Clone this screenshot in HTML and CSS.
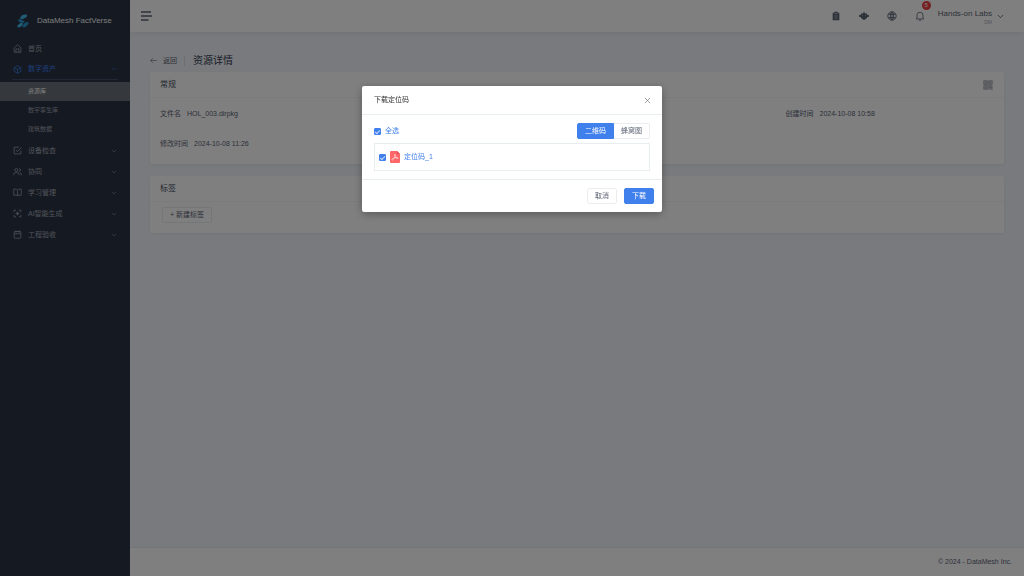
FILE: index.html
```
<!DOCTYPE html>
<html lang="zh-CN">
<head>
    <meta charset="UTF-8">
    <title>资源详情 - DataMesh FactVerse</title>
    <link rel="stylesheet" href="styles.css">
</head>
<body>
    <svg class="symbols" aria-hidden="true">
        <symbol id="chevron" viewBox="0 0 24 24"><path d="M3 7l9 9 9-9"/></symbol>
    </svg>

    <div class="app">
        <aside class="sidebar">
            <a class="brand" href="#">
                <svg class="logo" viewBox="0 0 24 30">
                    <path class="logo-light" d="M6 8Q9 1 17 1H20Q22 6 17 8L11 11Q5 12 6 8Z"/>
                    <path class="logo-mid" d="M2 11Q5 10 9 13L15 15Q16 19 10 19Q1 18 2 11Z"/>
                    <path class="logo-light" d="M0 25Q4 19 10 19Q13 20 11 24Q7 29 2 29Q-1 28 0 25Z"/>
                    <path class="logo-mid" d="M12 24Q16 17 21 17Q25 18 23 22Q18 29 13 29Q10 28 12 24Z"/>
                </svg>
                <span>DataMesh FactVerse</span>
            </a>
            <nav class="menu">
                <a class="menu-item" href="#">
                    <svg class="icon" viewBox="0 0 24 24"><path d="M3 10l9-8 9 8v12H3zM8 22v-9h8v9"/></svg>
                    <span>首页</span>
                </a>
                <a class="menu-item open" href="#">
                    <svg class="icon" viewBox="0 0 24 24"><path d="M12 2l9 5v10l-9 5-9-5V7zM3 7l9 5 9-5M12 12v10"/></svg>
                    <span>数字资产</span>
                    <svg class="arrow up"><use href="#chevron"/></svg>
                </a>
                <div class="submenu">
                    <a class="active" href="#">资源库</a>
                    <a href="#">数字孪生库</a>
                    <a href="#">建筑数据</a>
                </div>
                <a class="menu-item" href="#">
                    <svg class="icon" viewBox="0 0 24 24"><path d="M21 12v9H3V3h13M8 10l4 5L22 4"/></svg>
                    <span>设备检查</span>
                    <svg class="arrow"><use href="#chevron"/></svg>
                </a>
                <a class="menu-item" href="#">
                    <svg class="icon" viewBox="0 0 24 24"><circle cx="9" cy="8" r="4"/><path d="M2 22v-3q0-4 4-4h6q4 0 4 4v3M16 4q4 1 4 4t-4 4M19 15q3 1 3 4v3"/></svg>
                    <span>协同</span>
                    <svg class="arrow"><use href="#chevron"/></svg>
                </a>
                <a class="menu-item" href="#">
                    <svg class="icon" viewBox="0 0 24 24"><path d="M12 6q-2-3-5-3H2v16h6q3 0 4 2 1-2 4-2h6V3h-5q-3 0-5 3zM12 6v15"/></svg>
                    <span>学习管理</span>
                    <svg class="arrow"><use href="#chevron"/></svg>
                </a>
                <a class="menu-item" href="#">
                    <svg class="icon" viewBox="0 0 24 24"><path d="M3 8V3h5M16 3h5v5M21 16v5h-5M8 21H3v-5M12 7v10M7 12h10M8 8l1 1M16 8l-1 1M8 16l1-1M16 16l-1-1"/></svg>
                    <span>AI智能生成</span>
                    <svg class="arrow"><use href="#chevron"/></svg>
                </a>
                <a class="menu-item" href="#">
                    <svg class="icon" viewBox="0 0 24 24"><rect x="3" y="4" width="18" height="18" rx="2"/><path d="M3 10h18M8 1v6M16 1v6"/></svg>
                    <span>工程验收</span>
                    <svg class="arrow"><use href="#chevron"/></svg>
                </a>
            </nav>
        </aside>

        <div class="page">
            <header class="topbar">
                <button class="toggle" type="button" aria-label="折叠菜单">
                    <svg viewBox="0 0 24 20"><path d="M1 2h20M1 10h22M1 18h15"/></svg>
                </button>
                <div class="tools">
                    <button class="tool" type="button" aria-label="任务">
                        <svg viewBox="0 0 24 24"><path class="solid" d="M4 4h4V2h8v2h4v18H4z"/><path class="cut" d="M8 6h8M8 12h8M8 17h8"/></svg>
                    </button>
                    <button class="tool" type="button" aria-label="助手">
                        <svg viewBox="0 0 28 24"><path class="solid" d="M14 0l3 5h4q2 0 2 4h3q2 0 2 3t-2 3h-3q0 4-4 5l-5 4-5-4q-4-1-4-5H2q-2 0-2-3t2-3h3q0-4 2-4h4z"/><circle class="eye" cx="10" cy="11" r="1"/><circle class="eye" cx="18" cy="11" r="1"/></svg>
                    </button>
                    <button class="tool" type="button" aria-label="语言">
                        <svg viewBox="0 0 24 24"><circle cx="12" cy="12" r="10"/><ellipse cx="12" cy="12" rx="4" ry="10"/><path d="M3 8h18M3 16h18M12 2v20"/></svg>
                    </button>
                    <button class="tool" type="button" aria-label="通知">
                        <svg viewBox="0 0 24 24"><path d="M3 19h18l-2-4V9q0-6-7-6T5 9v6zM9 22h6"/></svg>
                        <span class="badge">5</span>
                    </button>
                    <button class="user" type="button">
                        <span class="user-text">
                            <span class="user-name">Hands-on Labs</span>
                            <span class="user-role">DM</span>
                        </span>
                        <svg><use href="#chevron"/></svg>
                    </button>
                </div>
            </header>

            <main class="content">
                <div class="page-head">
                    <a class="back" href="#">
                        <svg viewBox="0 0 24 24"><path d="M23 12H2M10 4l-8 8 8 8"/></svg>
                        返回
                    </a>
                    <h1>资源详情</h1>
                </div>

                <section class="card">
                    <div class="card-head">
                        <h2>常规</h2>
                        <button class="qr" type="button" aria-label="定位码">
                            <svg viewBox="0 0 24 24"><path class="qr-back" d="M1 1h22v22H1z"/><path d="M2 2h8v8H2zM14 2h8v8h-8zM2 14h8v8H2zM5 6h2M17 6h2M5 18h2M13 14h4v4h-3v4M19 13v5h4M18 22h5"/></svg>
                        </button>
                    </div>
                    <dl class="fields">
                        <div><dt>文件名</dt><dd>HOL_003.dirpkg</dd></div>
                        <div><dt>创建时间</dt><dd>2024-10-08 10:58</dd></div>
                        <div><dt>修改时间</dt><dd>2024-10-08 11:26</dd></div>
                    </dl>
                </section>

                <section class="card">
                    <div class="card-head">
                        <h2>标签</h2>
                    </div>
                    <div class="tags">
                        <button class="btn" type="button">+ 新建标签</button>
                    </div>
                </section>
            </main>

            <footer class="footer">© 2024 - DataMesh Inc.</footer>
        </div>
    </div>

    <div class="overlay">
        <div class="modal" role="dialog" aria-modal="true" aria-labelledby="modal-title">
            <div class="modal-head">
                <h2 id="modal-title">下载定位码</h2>
                <button class="close" type="button" aria-label="关闭">
                    <svg viewBox="0 0 24 24"><path d="M3 3l18 18M21 3L3 21"/></svg>
                </button>
            </div>
            <div class="modal-body">
                <div class="modal-bar">
                    <label class="check"><input type="checkbox" checked>全选</label>
                    <div class="segmented">
                        <button class="btn primary" type="button">二维码</button>
                        <button class="btn" type="button">蜂窝图</button>
                    </div>
                </div>
                <div class="code-list">
                    <label class="check">
                        <input type="checkbox" checked>
                        <svg class="pdf" viewBox="0 0 20 24"><path class="pdf-page" d="M2 0h12l6 6v16q0 2-2 2H2q-2 0-2-2V2q0-2 2-2z"/><path class="pdf-fold" d="M14 0l6 6h-6z"/><path class="pdf-mark" d="M9 7q2-1 2 2-1 6-6 9-2 0-1-2 4-3 10-3 3 0 2 2-3 1-6-4-1-3-1-4z"/></svg>
                        定位码_1
                    </label>
                </div>
            </div>
            <div class="modal-foot">
                <button class="btn" type="button">取消</button>
                <button class="btn primary" type="button">下载</button>
            </div>
        </div>
    </div>
</body>
</html>
```
FILE: styles.css
```
* {
    box-sizing: border-box;
}
body {
    margin: 0;
    font-family: "Liberation Sans", "Noto Sans CJK SC", sans-serif;
    font-size: 7px;
    line-height: 10px;
    color: #5a6274;
    background: #f3f5fa;
}
h1, h2, dl, dd {
    margin: 0;
    font-weight: 400;
}
a {
    color: inherit;
    text-decoration: none;
}
button {
    font: inherit;
    color: inherit;
    padding: 0;
    border: 0;
    background: none;
    cursor: pointer;
}
svg {
    display: block;
    flex: none;
    fill: none;
    stroke: currentColor;
    stroke-width: 2;
}
.symbols {
    display: none;
}
.app {
    display: flex;
    min-height: 100vh;
}

/* sidebar */
.sidebar {
    flex: none;
    width: 130px;
    background: #2b3344;
    color: #a0a5b0;
}
.brand {
    display: flex;
    align-items: center;
    gap: 8px;
    height: 38px;
    padding: 3px 0 0 17px;
    font-size: 8px;
    color: #f0f2f5;
}
.logo {
    width: 12px;
    height: 14px;
    stroke: none;
}
.logo-light {
    fill: #42b7e8;
}
.logo-mid {
    fill: #2599d2;
}
.menu-item {
    display: flex;
    align-items: center;
    gap: 6px;
    height: 21px;
    padding: 0 13px;
}
.menu-item.open {
    margin: 0 12px;
    padding: 0 1px;
    color: #3a7ff0;
    border-bottom: 1px solid #434f68;
}
.icon {
    width: 9px;
    height: 9px;
}
.arrow {
    width: 6px;
    height: 6px;
    margin-left: auto;
}
.up {
    transform: rotate(180deg);
}
.submenu {
    padding: 2px 0 1px;
    font-size: 6px;
}
.submenu a {
    display: block;
    padding: 0 28px;
    line-height: 19px;
}
.submenu .active {
    background: #6b7178;
    color: #fff;
}

/* header */
.page {
    display: flex;
    flex: 1;
    flex-direction: column;
}
.topbar {
    display: flex;
    align-items: center;
    justify-content: space-between;
    height: 32px;
    padding: 0 20px 0 10px;
    background: #fff;
    box-shadow: 0 1px 6px rgba(0, 21, 41, 0.08);
}
.toggle svg {
    width: 13px;
    height: 10px;
    stroke-width: 3;
}
.tools {
    display: flex;
    align-items: center;
    gap: 18px;
}
.tool {
    position: relative;
}
.tool svg {
    width: 10px;
    height: 10px;
}
.solid {
    fill: currentColor;
    stroke: none;
}
.cut {
    stroke: #b5b9c2;
}
.eye {
    fill: #fff;
    stroke: none;
}
.badge {
    position: absolute;
    top: -10px;
    right: -6px;
    width: 9px;
    height: 9px;
    border-radius: 5px;
    background: #ed4044;
    color: #fff;
    font-size: 6px;
    line-height: 9px;
    text-align: center;
}
.user {
    display: flex;
    align-items: center;
    gap: 5px;
    margin-left: -5px;
    padding-top: 1px;
}
.user-text {
    display: flex;
    flex-direction: column;
    text-align: right;
}
.user-name {
    font-size: 8px;
}
.user-role {
    font-size: 5px;
    line-height: 6px;
    color: #a5a9b2;
}
.user svg {
    width: 7px;
    height: 7px;
    stroke-width: 3;
}

/* content */
.content {
    flex: 1;
    padding: 20px;
}
.page-head {
    display: flex;
    align-items: center;
    height: 17px;
    margin-bottom: 3px;
}
.back {
    display: flex;
    align-items: center;
    gap: 6px;
    padding-right: 7px;
    border-right: 1px solid #dcdee2;
}
.back svg {
    width: 7px;
    height: 7px;
}
h1 {
    margin-left: 8px;
    font-size: 10px;
    color: #303a50;
}
.card {
    margin-bottom: 12px;
    border-radius: 2px;
    background: #fff;
    box-shadow: 0 1px 4px rgba(0, 21, 41, 0.06);
}
.card-head {
    display: flex;
    align-items: center;
    justify-content: space-between;
    height: 26px;
    padding: 0 11px 0 10px;
    border-bottom: 1px solid #f5f6f8;
}
.card-head h2 {
    font-size: 8px;
    color: #464e5f;
}
.qr svg {
    width: 10px;
    height: 10px;
    color: #a5a9b2;
}
.qr-back {
    fill: #cdd0d6;
    stroke: none;
}
.fields {
    display: grid;
    grid-template-columns: 3fr 1fr;
    row-gap: 20px;
    padding: 11px 10px 15px;
}
.fields div {
    display: flex;
    gap: 6px;
}
.tags {
    padding: 5px 12px 10px;
}

/* buttons */
.btn {
    height: 16px;
    padding: 0 7px;
    border: 1px solid #ebedf0;
    border-radius: 2px;
    background: #fff;
    line-height: 14px;
}
.primary {
    border-color: #4080ed;
    background: #4080ed;
    color: #fff;
}

/* dialog */
.overlay {
    position: fixed;
    inset: 0;
    padding: 86px 20px 20px;
    background: rgba(0, 0, 0, 0.5);
}
.modal {
    max-width: 300px;
    margin: 0 auto;
    border-radius: 2px;
    background: #fff;
    box-shadow: 0 2px 8px rgba(0, 0, 0, 0.3);
}
.modal-head {
    display: flex;
    align-items: center;
    justify-content: space-between;
    height: 29px;
    padding: 0 11px 0 12px;
    border-bottom: 1px solid #e8eef0;
    color: #303133;
}
.modal-head h2 {
    font-size: 7px;
}
.close svg {
    width: 7px;
    height: 7px;
    color: #606266;
}
.modal-body {
    padding: 8px 12px;
}
.modal-bar {
    display: flex;
    align-items: center;
    justify-content: space-between;
    margin-bottom: 4px;
}
.check {
    display: flex;
    align-items: center;
    gap: 4px;
    color: #4080ed;
}
.check input {
    display: grid;
    place-items: center;
    width: 7px;
    height: 7px;
    margin: 0;
    border: 1px solid #4080ed;
    border-radius: 1px;
    appearance: none;
}
.check input:checked {
    background: #4080ed;
}
.check input:checked::after {
    content: "";
    width: 4px;
    height: 2px;
    border: solid #c5d9fa;
    border-width: 0 0 1px 1px;
    transform: rotate(-45deg);
}
.segmented {
    display: flex;
}
.segmented .btn:first-child {
    border-radius: 2px 0 0 2px;
}
.segmented .btn:last-child {
    border-left: 0;
    border-radius: 0 2px 2px 0;
}
.code-list {
    padding: 7px 4px;
    border: 1px solid #e8eef0;
}
.pdf {
    width: 10px;
    height: 12px;
    stroke: none;
}
.pdf-page {
    fill: #ff6768;
}
.pdf-fold {
    fill: #e04a50;
}
.pdf-mark {
    stroke: #fff;
    stroke-width: 1;
}
.modal-foot {
    display: flex;
    justify-content: flex-end;
    gap: 7px;
    padding: 8px;
    border-top: 1px solid #e8eef0;
}

/* footer */
.footer {
    padding: 9px 12px;
    border-top: 1px solid #e8eaec;
    background: #fff;
    text-align: right;
}
```
